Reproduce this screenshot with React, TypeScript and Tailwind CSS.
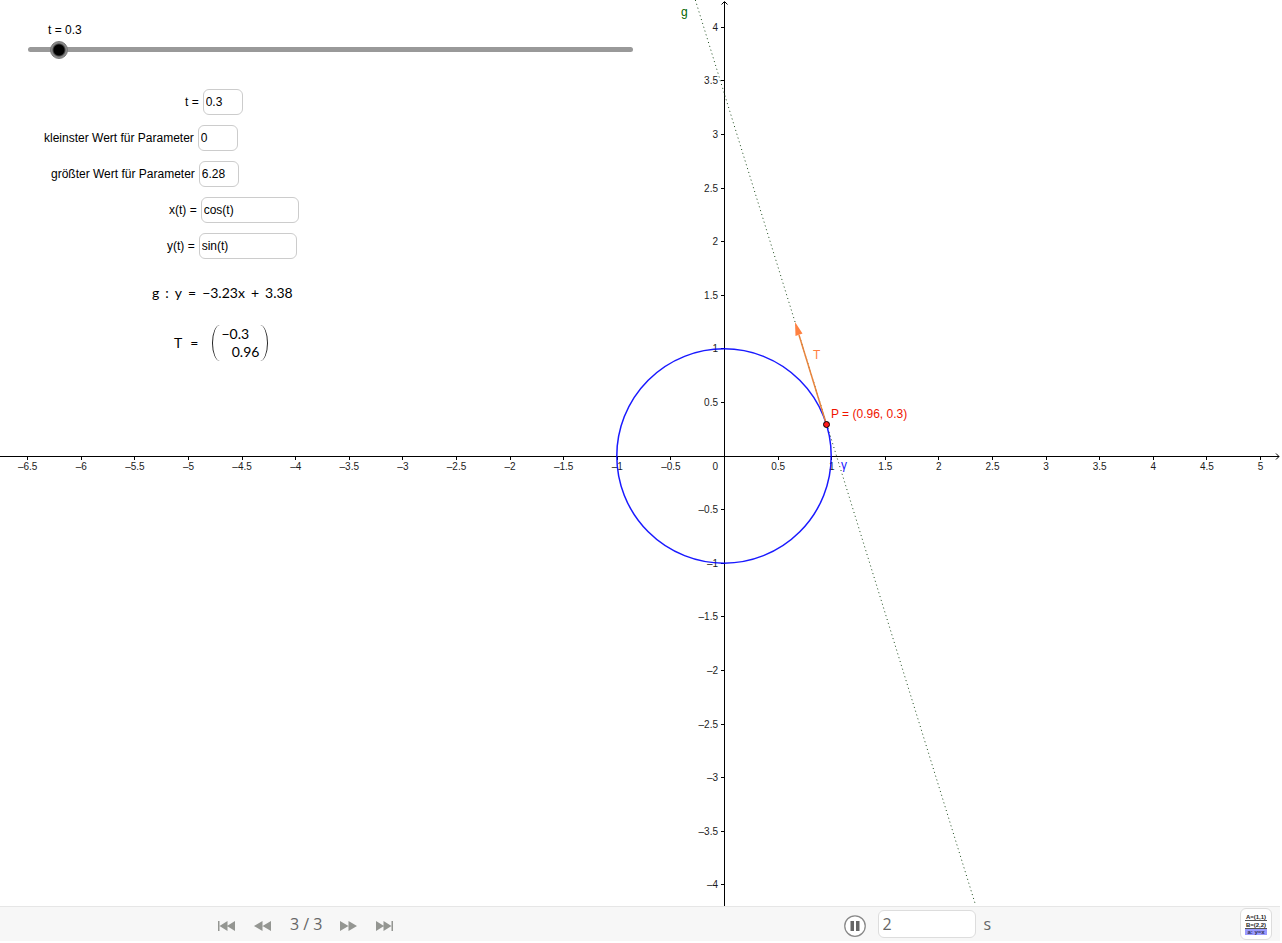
import React, { useState } from 'react';

const ORIGIN = { x: 724, y: 456 };
const UNIT = 107.2;

const toX = (x: number) => ORIGIN.x + x * UNIT;
const toY = (y: number) => ORIGIN.y - y * UNIT;
const formatTick = (n: number) => (n < 0 ? `–${Math.abs(n)}` : `${n}`);

const range = (from: number, to: number): number[] =>
    Array.from({ length: (to - from) * 2 + 1 }, (_, i) => from + i / 2).filter(n => n !== 0);

const X_TICKS = range(-6.5, 5);
const Y_TICKS = range(-4, 4);

interface Field {
    id: string;
    label: string;
    value: string;
    indent: string;
    width: string;
}

const FIELDS: Field[] = [
    { id: 't', label: 't =', value: '0.3', indent: 'pl-[185px]', width: 'w-[40px]' },
    { id: 'min', label: 'kleinster Wert für Parameter', value: '0', indent: 'pl-[44px]', width: 'w-[40px]' },
    { id: 'max', label: 'größter Wert für Parameter', value: '6.28', indent: 'pl-[51px]', width: 'w-[40px]' },
    { id: 'xt', label: 'x(t) =', value: 'cos(t)', indent: 'pl-[169px]', width: 'w-[98px]' },
    { id: 'yt', label: 'y(t) =', value: 'sin(t)', indent: 'pl-[167px]', width: 'w-[98px]' },
];

const TANGENT_TERMS = ['g', ':', 'y', '=', '−3.23x', '+', '3.38'];

const Graph: React.FC = () => {
    const t = 0.3;
    const px = toX(Math.cos(t));
    const py = toY(Math.sin(t));

    return (
        <svg viewBox="0 0 1280 906" className="col-start-1 row-start-1 w-full" role="img" aria-label="Parameterkurve mit Tangente">
            <g stroke="#000" strokeWidth="1" fill="none" shapeRendering="crispEdges">
                <path d="M0 456.5H1279" />
                <path d="M724.5 2V906" />
                {X_TICKS.map(n => (
                    <path key={n} d={`M${Math.round(toX(n)) + 0.5} 457v3`} />
                ))}
                {Y_TICKS.map(n => (
                    <path key={n} d={`M721 ${Math.floor(toY(n)) + 0.5}h3`} />
                ))}
            </g>
            <path d="M721.5 4.5l3-3 3 3M1276 453.5l3 3-3 3" fill="none" stroke="#000" />

            <g fontSize="10" fill="#1c1c1c">
                {X_TICKS.map(n => (
                    <text key={n} x={toX(n) + 0.5} y="470" textAnchor="middle">{formatTick(n)}</text>
                ))}
                <text x="718" y="470" textAnchor="end">0</text>
                {Y_TICKS.map(n => (
                    <text key={n} x="718" y={Math.floor(toY(n)) + 4} textAnchor="end">{formatTick(n)}</text>
                ))}
            </g>

            <path
                d={`M${toX(-0.272) + 0.5} 0L${toX(2.339) + 0.5} 904`}
                fill="none"
                stroke="#1a4a1a"
                strokeWidth="1"
                strokeDasharray="1 3"
            />
            <circle cx={ORIGIN.x} cy={ORIGIN.y} r={UNIT} fill="none" stroke="#0000ff" strokeOpacity="0.9" strokeWidth="1.5" />

            <path d={`M${px} ${py}L799 335`} stroke="#e8843c" strokeWidth="1.5" />
            <path d="M795 322l7.5 11.5-7 2.5z" fill="#ff8040" />
            <circle cx="826.5" cy="424.5" r="3" fill="#ff1a1a" stroke="#000" />

            <g fontSize="12">
                <text x="681" y="16" fill="#006400">g</text>
                <text x="813" y="359" fill="#ff7f40">T</text>
                <text x="831" y="418" fill="#f01400">P = (0.96, 0.3)</text>
                <text x="841" y="469" fill="#1414ff">γ</text>
            </g>
        </svg>
    );
};

const ParameterPanel: React.FC = () => {
    const [t, setT] = useState('0.3');

    return (
        <div className="z-10 col-start-1 row-start-1 flex flex-col items-start self-start justify-self-start pt-[22px] text-xs">
            <label htmlFor="slider" className="pl-12 leading-4">t = {t}</label>
            <div className="mt-[9px] ml-7 flex h-[5px] w-[605px] items-center rounded-full bg-[#999]">
                <input
                    id="slider"
                    type="range"
                    min="0"
                    max="6.28"
                    step="0.01"
                    value={t}
                    onChange={e => setT(e.target.value)}
                    className="-mx-[7px] h-[18px] min-w-0 flex-1 appearance-none bg-transparent [&::-webkit-slider-thumb]:h-[18px] [&::-webkit-slider-thumb]:w-[18px] [&::-webkit-slider-thumb]:appearance-none [&::-webkit-slider-thumb]:rounded-full [&::-webkit-slider-thumb]:border [&::-webkit-slider-thumb]:border-[#777] [&::-webkit-slider-thumb]:bg-[radial-gradient(circle,#000_0_5px,#444_6px,#888_7px)]"
                />
            </div>

            <form className="mt-[37px] flex flex-col gap-[10px]">
                {FIELDS.map(field => (
                    <div key={field.id} className={`flex items-center gap-1 ${field.indent}`}>
                        <label htmlFor={field.id}>{field.label}</label>
                        <input
                            id={field.id}
                            type="text"
                            defaultValue={field.value}
                            className={`h-[26px] rounded-md border border-[#ccc] bg-white pl-0.5 ${field.width}`}
                        />
                    </div>
                ))}
            </form>

            <p className="mt-6 flex gap-1.5 pl-[152px] font-[Lato,sans-serif] text-sm leading-5">
                {TANGENT_TERMS.map(term => (
                    <span key={term}>{term}</span>
                ))}
            </p>

            <div className="mt-[22px] flex items-center pl-[174px] font-[Lato,sans-serif] text-sm">
                <span className="pr-2">T</span>
                <span className="pr-3.5">=</span>
                <div className="w-14 rounded-[8px/18px] border-x border-[#222] px-2 leading-[18px]">
                    <div>−0.3</div>
                    <div className="text-right">0.96</div>
                </div>
            </div>
        </div>
    );
};

const NavButton: React.FC<{ label: string; d: string }> = ({ label, d }) => (
    <button type="button" aria-label={label} className="pt-1">
        <svg width="18" height="10" viewBox="0 0 18 10" fill="#949692"><path d={d} /></svg>
    </button>
);

const NavigationBar: React.FC = () => (
    <footer className="flex h-[35px] items-center border-t border-[#e6e6e6] bg-[#f7f7f7] font-['Open_Sans','Noto_Sans',sans-serif] text-base text-[#666]">
        <nav className="flex w-[65.9%] items-center gap-[18px] pl-[218px]">
            <NavButton label="Zum Anfang" d="M0 0h1.5v10H0zM9.5 0v10L1.5 5zM17 0v10L9 5z" />
            <NavButton label="Zurück" d="M8.5 0v10L0 5zM17 0v10L8.5 5z" />
            <span>3 / 3</span>
            <NavButton label="Vor" d="M0 0l8.5 5L0 10zM8.5 0L17 5l-8.5 5z" />
            <NavButton label="Zum Ende" d="M0 0l8 5-8 5zM7.5 0l8 5-8 5zM15.5 0H17v10h-1.5z" />
        </nav>
        <button type="button" aria-label="Pause" className="pt-1">
            <svg width="22" height="22" viewBox="0 0 22 22">
                <circle cx="11" cy="11" r="10.25" fill="#fff" stroke="#888" strokeWidth="1.25" />
                <path d="M6.5 6H10v10H6.5zM12 6h3.5v10H12z" fill="#666" />
            </svg>
        </button>
        <input
            id="speed"
            type="text"
            defaultValue="2"
            className="ml-3 h-7 w-[98px] rounded-md border border-[#ddd] bg-white px-1"
        />
        <label htmlFor="speed" className="pl-2">s</label>
        <button type="button" aria-label="Konstruktionsprotokoll" className="mr-2 ml-auto rounded-md border border-[#ddd] bg-white">
            <svg width="30" height="30" viewBox="0 0 30 30">
                <path d="M4 20h22v6H4z" fill="#9a9aff" />
                <path d="M4 11.5h22M4 19.5h22" stroke="#555" />
                <g fontSize="6" fontWeight="bold" fill="#222" textAnchor="middle" fontFamily="Liberation Sans, sans-serif">
                    <text x="15" y="10">A=(1,1)</text>
                    <text x="15" y="18">B=(2,2)</text>
                    <text x="15" y="25" fill="#335">a: y=x</text>
                </g>
            </svg>
        </button>
    </footer>
);

const App: React.FC = () => (
    <div className="bg-white pr-0.5 pb-0.5 font-['Liberation_Sans',Arial,sans-serif] text-black">
        <main className="grid grid-cols-1">
            <Graph />
            <ParameterPanel />
        </main>
        <NavigationBar />
    </div>
);

export default App;
